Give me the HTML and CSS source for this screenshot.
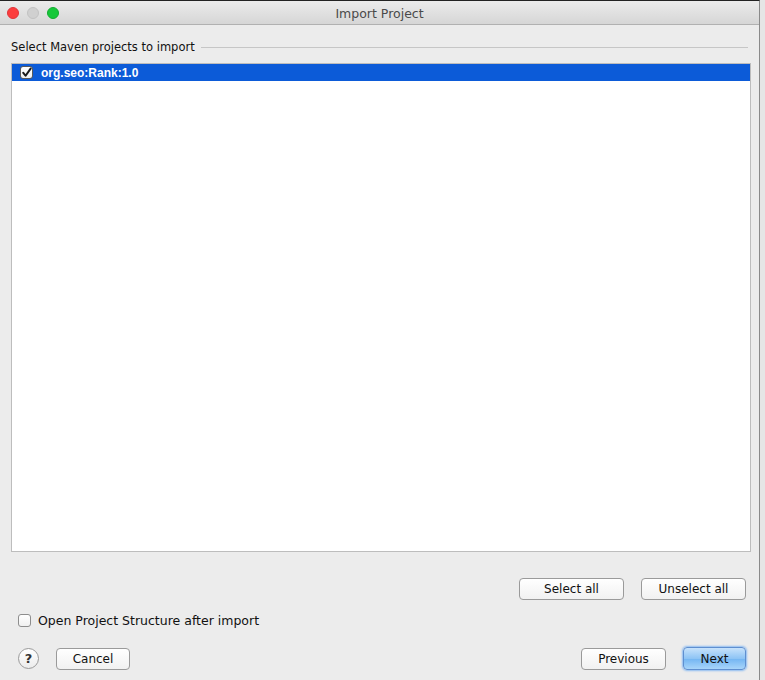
FILE: index.html
```html
<!DOCTYPE html>
<html>
<head>
<meta charset="utf-8">
<link rel="stylesheet" href="styles.css">
</head>
<body>
<div class="window">
  <div class="titlebar">
    <div class="lights">
      <span class="light red"></span>
      <span class="light gray"></span>
      <span class="light green"></span>
    </div>
    <div class="title">Import Project</div>
  </div>
  <div class="content">
    <div class="group-label"><span>Select Maven projects to import</span><div class="rule"></div></div>
    <div class="listbox">
      <div class="row selected">
        <span class="cb checked"><svg width="12" height="12" viewBox="0 0 12 12"><path d="M2.5 5.8 L5 9 L10.5 1.2" fill="none" stroke="#1a1a1a" stroke-width="2.2" stroke-linecap="round" stroke-linejoin="round"/></svg></span>
        <span class="row-text">org.seo:Rank:1.0</span>
      </div>
    </div>
    <div class="sel-buttons">
      <button class="btn w105">Select all</button>
      <button class="btn w105">Unselect all</button>
    </div>
    <label class="open-row"><span class="cb"></span><span>Open Project Structure after import</span></label>
    <div class="footer">
      <div class="footer-left">
        <span class="help">?</span>
        <button class="btn cancel">Cancel</button>
      </div>
      <div class="footer-right">
        <button class="btn prev">Previous</button>
        <button class="btn next">Next</button>
      </div>
    </div>
  </div>
</div>
</body>
</html>
```
FILE: styles.css
```css
html, body {
  margin: 0;
  padding: 0;
  background: #e6e6e6;
}
body {
  font-family: "DejaVu Sans", "Liberation Sans", sans-serif;
  font-size: 12px;
  color: #111;
  width: 765px;
  height: 680px;
  overflow: hidden;
}
.window {
  width: 760px;
  height: 680px;
  background: #ececec;
  border-top: 1px solid #222;
  border-right: 1px solid #8a8a8a;
  box-sizing: border-box;
}
.titlebar {
  height: 23px;
  background: linear-gradient(#ebebeb, #d6d6d6);
  border-bottom: 1px solid #b1b1b1;
  display: flex;
  align-items: center;
  position: relative;
}
.lights {
  display: flex;
  gap: 8px;
  padding-left: 7px;
  padding-top: 1px;
}
.light {
  width: 12px;
  height: 12px;
  border-radius: 50%;
  box-sizing: border-box;
}
.red { background: #fc3d3d; border: 1px solid #e0343a; }
.gray { background: #d0d0d0; border: 1px solid #c2c2c2; }
.green { background: #16c83a; border: 1px solid #12ac2f; }
.title {
  position: absolute;
  left: 0;
  right: 0;
  top: 5px;
  text-align: center;
  font-size: 12.5px;
  color: #4a4a4a;
}
.content {
  padding: 14px 8px 0 11px;
}
.group-label {
  display: flex;
  align-items: center;
  gap: 6px;
  height: 16px;
  font-size: 11.5px;
  margin-right: 3px;
}
.rule {
  flex: 1;
  height: 1px;
  background: #c6c6c6;
}
.listbox {
  margin-top: 8px;
  height: 489px;
  background: #fff;
  border: 1px solid #bdbdbd;
  box-sizing: border-box;
}
.row {
  height: 17px;
  display: flex;
  align-items: center;
  padding-left: 8px;
}
.row.selected {
  background: #0c5bd8;
  color: #fff;
}
.row-text {
  font-family: "Liberation Sans", Arial, sans-serif;
  font-weight: bold;
  margin-left: 8px;
  font-size: 12px;
}
.cb {
  width: 13px;
  height: 13px;
  box-sizing: border-box;
  border: 1px solid #8d8d8d;
  border-radius: 3px;
  background: linear-gradient(#ffffff, #f0f0f0);
  display: inline-flex;
  align-items: center;
  justify-content: center;
}
.cb.checked {
  border-color: #5a5a5a;
}
.sel-buttons {
  display: flex;
  justify-content: flex-end;
  gap: 17px;
  margin-top: 26px;
  margin-right: 5px;
}
.btn {
  font-family: inherit;
  font-size: 12px;
  color: #111;
  height: 22px;
  border: 1px solid #9a9a9a;
  border-radius: 4px;
  background: linear-gradient(#ffffff, #f1f1f1);
  padding: 0;
  box-sizing: border-box;
}
.w105 { width: 105px; }
.open-row {
  display: flex;
  align-items: center;
  gap: 7px;
  margin-top: 13px;
  margin-left: 7px;
  font-size: 12.5px;
}
.footer {
  display: flex;
  justify-content: space-between;
  align-items: center;
  margin-top: 19px;
  margin-right: 5px;
}
.footer-left {
  display: flex;
  align-items: center;
  gap: 17px;
  margin-left: 7px;
}
.help {
  width: 21px;
  height: 21px;
  box-sizing: border-box;
  border: 1px solid #9a9a9a;
  border-radius: 50%;
  background: linear-gradient(#ffffff, #ececec);
  display: flex;
  align-items: center;
  justify-content: center;
  font-weight: bold;
  font-size: 13px;
  color: #333;
}
.cancel { width: 74px; }
.footer-right {
  display: flex;
  align-items: center;
  gap: 17px;
}
.prev { width: 85px; }
.next {
  width: 63px;
  height: 23px;
  border-color: #5f8fd0;
  background: linear-gradient(#c7e2fb, #8ec4f5 50%, #73b5f2 51%, #a8d5fa);
  box-shadow: 0 0 2px 1px #8cbcf2;
}
```
